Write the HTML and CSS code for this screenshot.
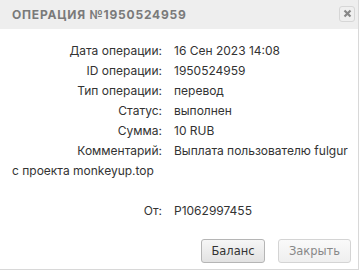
FILE: index.html
```html
<!DOCTYPE html>
<html>
<head>
<meta charset="utf-8">
<link rel="stylesheet" href="styles.css">
</head>
<body>
<div class="dialog">
  <div class="titlebar">
    <span class="title">Операция №1950524959</span>
    <button class="close" aria-label="close">
      <svg width="9" height="9" viewBox="0 0 9 9"><path d="M1.5 1.5 L7.5 7.5 M7.5 1.5 L1.5 7.5" stroke="#888" stroke-width="2.2" stroke-linecap="butt"/></svg>
    </button>
  </div>
  <div class="content">
    <div class="row"><span class="label">Дата операции:</span><span class="value">16 Сен 2023 14:08</span></div>
    <div class="row"><span class="label">ID операции:</span><span class="value">1950524959</span></div>
    <div class="row"><span class="label">Тип операции:</span><span class="value">перевод</span></div>
    <div class="row"><span class="label">Статус:</span><span class="value">выполнен</span></div>
    <div class="row"><span class="label">Сумма:</span><span class="value">10 RUB</span></div>
    <div class="row"><span class="label">Комментарий:</span><span class="value">Выплата пользователю fulgur </span><span class="value">с проекта monkeyup.top</span></div>
    <div class="row spacer"></div>
    <div class="row"><span class="label">От:</span><span class="value">P1062997455</span></div>
  </div>
  <div class="buttons">
    <button class="btn balance">Баланс</button>
    <button class="btn disabled">Закрыть</button>
  </div>
</div>
</body>
</html>
```
FILE: styles.css
```css
html, body {
  margin: 0;
  padding: 0;
  background: #fff;
}
.dialog {
  width: 358px;
  height: 269px;
  border-right: 1px solid #d8d8d8;
  border-bottom: 1px solid #d8d8d8;
  display: flex;
  flex-direction: column;
  font-family: Inter, "DejaVu Sans", sans-serif;
}
.titlebar {
  height: 29px;
  background: #eeeeee;
  display: flex;
  align-items: center;
  justify-content: space-between;
  padding: 0 3px 0 12px;
}
.title {
  font-weight: 700;
  font-size: 12px;
  color: #7a7a7a;
  text-transform: uppercase;
  letter-spacing: 0.8px;
}
.close {
  width: 16px;
  height: 16px;
  border: 1px solid #d6d6d6;
  border-radius: 3px;
  background: #efefef;
  padding: 0;
  display: flex;
  align-items: center;
  justify-content: center;
  margin-top: -2px;
}
.content {
  padding: 12px 2px 0 12px;
  font-size: 12px;
  color: #333;
  line-height: 20px;
}
.row {
  min-height: 20px;
}
.label {
  display: inline-block;
  width: 150px;
  text-align: right;
  margin-right: 12px;
}
.buttons {
  display: flex;
  justify-content: flex-end;
  gap: 13px;
  padding: 18px 7px 0 0;
}
.btn {
  font-family: "DejaVu Sans", sans-serif;
  font-size: 11.5px;
  color: #333;
  height: 24px;
  width: 64px;
  padding: 0;
  border: 1px solid #b5b5b5;
  border-radius: 3px;
  background: linear-gradient(#f6f6f6, #e2e2e2);
}
.btn.disabled {
  width: 73px;
  color: #888;
  border-color: #d4d4d4;
  background: linear-gradient(#fafafa, #efefef);
}
```
